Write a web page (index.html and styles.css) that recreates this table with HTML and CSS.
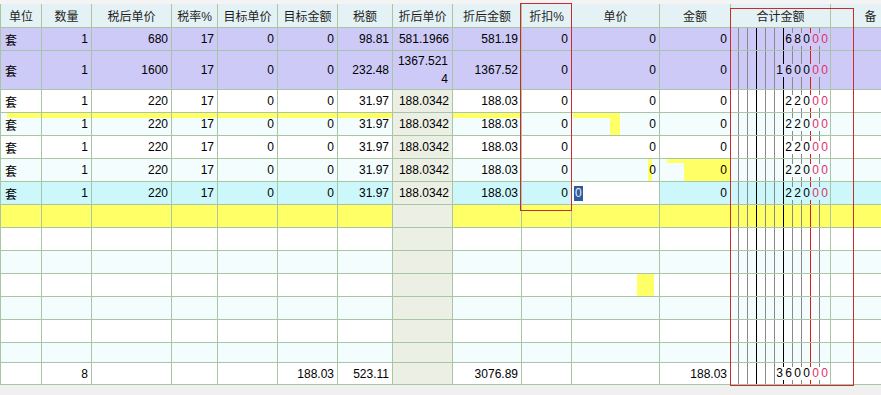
FILE: index.html
```html
<!DOCTYPE html>
<html lang="zh-CN">
<head>
<meta charset="utf-8">
<title>明细表</title>
<link rel="stylesheet" href="styles.css">
</head>
<body>
<div class="page">
  <div class="topbar"></div>
  <div class="grid">
    <div class="row head">
      <div class="cell">单位</div><div class="cell">数量</div><div class="cell">税后单价</div><div class="cell">税率%</div><div class="cell">目标单价</div><div class="cell">目标金额</div><div class="cell">税额</div><div class="cell">折后单价</div><div class="cell">折后金额</div><div class="cell">折扣%</div><div class="cell">单价</div><div class="cell">金额</div><div class="cell">合计金额</div><div class="cell">备</div>
    </div>
    <div class="row purple">
      <div class="cell">套</div><div class="cell">1</div><div class="cell">680</div><div class="cell">17</div><div class="cell">0</div><div class="cell">0</div><div class="cell">98.81</div><div class="cell">581.1966</div><div class="cell">581.19</div><div class="cell">0</div><div class="cell">0</div><div class="cell">0</div><div class="cell sum"><span class="amt"><span>6</span><span>8</span><span>0</span><span class="r">0</span><span class="r">0</span></span></div><div class="cell"></div>
    </div>
    <div class="row purple tall">
      <div class="cell">套</div><div class="cell">1</div><div class="cell">1600</div><div class="cell">17</div><div class="cell">0</div><div class="cell">0</div><div class="cell">232.48</div><div class="cell wrap">1367.5214</div><div class="cell">1367.52</div><div class="cell">0</div><div class="cell">0</div><div class="cell">0</div><div class="cell sum"><span class="amt"><span>1</span><span>6</span><span>0</span><span>0</span><span class="r">0</span><span class="r">0</span></span></div><div class="cell"></div>
    </div>
    <div class="row">
      <div class="cell">套</div><div class="cell">1</div><div class="cell">220</div><div class="cell">17</div><div class="cell">0</div><div class="cell">0</div><div class="cell">31.97</div><div class="cell tint">188.0342</div><div class="cell">188.03</div><div class="cell">0</div><div class="cell">0</div><div class="cell">0</div><div class="cell sum"><span class="amt"><span>2</span><span>2</span><span>0</span><span class="r">0</span><span class="r">0</span></span></div><div class="cell"></div>
    </div>
    <div class="row alt streak">
      <div class="cell">套</div><div class="cell">1</div><div class="cell">220</div><div class="cell">17</div><div class="cell">0</div><div class="cell">0</div><div class="cell">31.97</div><div class="cell tint">188.0342</div><div class="cell">188.03</div><div class="cell">0</div><div class="cell smear-a">0</div><div class="cell">0</div><div class="cell sum"><span class="amt"><span>2</span><span>2</span><span>0</span><span class="r">0</span><span class="r">0</span></span></div><div class="cell"></div>
    </div>
    <div class="row">
      <div class="cell">套</div><div class="cell">1</div><div class="cell">220</div><div class="cell">17</div><div class="cell">0</div><div class="cell">0</div><div class="cell">31.97</div><div class="cell tint">188.0342</div><div class="cell">188.03</div><div class="cell">0</div><div class="cell">0</div><div class="cell">0</div><div class="cell sum"><span class="amt"><span>2</span><span>2</span><span>0</span><span class="r">0</span><span class="r">0</span></span></div><div class="cell"></div>
    </div>
    <div class="row alt">
      <div class="cell">套</div><div class="cell">1</div><div class="cell">220</div><div class="cell">17</div><div class="cell">0</div><div class="cell">0</div><div class="cell">31.97</div><div class="cell tint">188.0342</div><div class="cell">188.03</div><div class="cell">0</div><div class="cell smear-b">0</div><div class="cell smear-c">0</div><div class="cell sum"><span class="amt"><span>2</span><span>2</span><span>0</span><span class="r">0</span><span class="r">0</span></span></div><div class="cell"></div>
    </div>
    <div class="row sel">
      <div class="cell">套</div><div class="cell">1</div><div class="cell">220</div><div class="cell">17</div><div class="cell">0</div><div class="cell">0</div><div class="cell">31.97</div><div class="cell tint">188.0342</div><div class="cell">188.03</div><div class="cell">0</div><div class="cell editing"><span class="selected">0</span></div><div class="cell">0</div><div class="cell sum"><span class="amt"><span>2</span><span>2</span><span>0</span><span class="r">0</span><span class="r">0</span></span></div><div class="cell"></div>
    </div>
    <div class="row yel">
      <div class="cell"></div><div class="cell"></div><div class="cell"></div><div class="cell"></div><div class="cell"></div><div class="cell"></div><div class="cell"></div><div class="cell tint"></div><div class="cell"></div><div class="cell"></div><div class="cell"></div><div class="cell"></div><div class="cell sum"></div><div class="cell"></div>
    </div>
    <div class="row">
      <div class="cell"></div><div class="cell"></div><div class="cell"></div><div class="cell"></div><div class="cell"></div><div class="cell"></div><div class="cell"></div><div class="cell tint"></div><div class="cell"></div><div class="cell"></div><div class="cell"></div><div class="cell"></div><div class="cell sum"></div><div class="cell"></div>
    </div>
    <div class="row alt">
      <div class="cell"></div><div class="cell"></div><div class="cell"></div><div class="cell"></div><div class="cell"></div><div class="cell"></div><div class="cell"></div><div class="cell tint"></div><div class="cell"></div><div class="cell"></div><div class="cell"></div><div class="cell"></div><div class="cell sum"></div><div class="cell"></div>
    </div>
    <div class="row">
      <div class="cell"></div><div class="cell"></div><div class="cell"></div><div class="cell"></div><div class="cell"></div><div class="cell"></div><div class="cell"></div><div class="cell tint"></div><div class="cell"></div><div class="cell"></div><div class="cell smear-d"></div><div class="cell"></div><div class="cell sum"></div><div class="cell"></div>
    </div>
    <div class="row alt">
      <div class="cell"></div><div class="cell"></div><div class="cell"></div><div class="cell"></div><div class="cell"></div><div class="cell"></div><div class="cell"></div><div class="cell tint"></div><div class="cell"></div><div class="cell"></div><div class="cell"></div><div class="cell"></div><div class="cell sum"></div><div class="cell"></div>
    </div>
    <div class="row">
      <div class="cell"></div><div class="cell"></div><div class="cell"></div><div class="cell"></div><div class="cell"></div><div class="cell"></div><div class="cell"></div><div class="cell tint"></div><div class="cell"></div><div class="cell"></div><div class="cell"></div><div class="cell"></div><div class="cell sum"></div><div class="cell"></div>
    </div>
    <div class="row alt short">
      <div class="cell"></div><div class="cell"></div><div class="cell"></div><div class="cell"></div><div class="cell"></div><div class="cell"></div><div class="cell"></div><div class="cell tint"></div><div class="cell"></div><div class="cell"></div><div class="cell"></div><div class="cell"></div><div class="cell sum"></div><div class="cell"></div>
    </div>
    <div class="row foot">
      <div class="cell"></div><div class="cell">8</div><div class="cell"></div><div class="cell"></div><div class="cell"></div><div class="cell">188.03</div><div class="cell">523.11</div><div class="cell tint"></div><div class="cell">3076.89</div><div class="cell"></div><div class="cell"></div><div class="cell">188.03</div><div class="cell sum"><span class="amt"><span>3</span><span>6</span><span>0</span><span>0</span><span class="r">0</span><span class="r">0</span></span></div><div class="cell"></div>
    </div>
  </div>
  <div class="mark m1"></div>
  <div class="mark m2"></div>
</div>
</body>
</html>
```

FILE: styles.css
```css
* { box-sizing: border-box; }

html, body {
  margin: 0;
  padding: 0;
  background: #f0f0f0;
}

.page {
  position: relative;
  width: 881px;
  height: 395px;
  overflow: hidden;
  background: #f0f0f0;
  font-family: "Liberation Sans", "Noto Sans CJK SC", sans-serif;
  font-size: 12px;
  color: #000;
}

.topbar {
  height: 4px;
  background: #f4f4f4;
}

.grid {
  width: 911px;
}

.row {
  display: grid;
  grid-template-columns: 42px 50px 80px 46px 60px 60px 55px 60px 69px 50px 88px 71px 100px 80px;
  height: 23px;
  border-bottom: 1px solid #a9c5a5;
  background-color: #ffffff;
}

.cell {
  display: flex;
  align-items: center;
  justify-content: flex-end;
  padding: 0 3px;
  border-right: 1px solid #a9c5a5;
  white-space: nowrap;
  overflow: hidden;
  background-repeat: no-repeat;
}

.cell:first-child {
  border-left: 1px solid #a9c5a5;
  justify-content: flex-start;
  padding-left: 4px;
}

.head {
  height: 24px;
  background-color: #e4f2f5;
  color: #1e1e1e;
}

.head .cell,
.head .cell:first-child {
  justify-content: center;
  padding: 0;
}

.purple { background-color: #cdcaf7; }
.tall { height: 39px; }
.alt { background-color: #f4fdfe; }
.sel { background-color: #ccf8fc; }
.yel { background-color: #ffff66; }
.short { height: 20px; }
.foot { height: 22px; }

.tint { background-color: #ebefe4; }

/* repaint smears left by the grid widget (drawn beneath the text) */
.streak {
  background-image: linear-gradient(#ffff66, #ffff66);
  background-size: 513px 5px;
  background-position: 7px 0;
  background-repeat: no-repeat;
}
.streak .cell:first-child,
.streak .cell:nth-child(-n+9) {
  background-image: none;
}
.streak .tint {
  background-image: linear-gradient(#ffff66, #ffff66);
  background-size: 100% 5px;
  background-position: 0 0;
}

.smear-a {
  background-image: linear-gradient(#ffff66, #ffff66), linear-gradient(#ffff66, #ffff66);
  background-size: 47px 5px, 10px 100%;
  background-position: 1px 0, 38px 0;
}

.smear-b {
  background-image: linear-gradient(#ffff66, #ffff66);
  background-size: 4px 100%;
  background-position: 76px 0;
}

.smear-c {
  background-image: linear-gradient(#ffff66, #ffff66), linear-gradient(#ffff66, #ffff66);
  background-size: 63px 4px, 46px 100%;
  background-position: 7px 0, 24px 0;
}

.smear-d {
  background-image: linear-gradient(#ffff66, #ffff66);
  background-size: 17px 100%;
  background-position: 65px 0;
}

.wrap {
  white-space: normal;
  word-break: break-all;
  text-align: right;
  line-height: 18px;
  padding-right: 4px;
}

.editing {
  background-color: #ffffff;
  justify-content: flex-start;
  padding-left: 2px;
}

.selected {
  display: inline-block;
  background: #2e5d9c;
  color: #e8eef8;
  line-height: 15px;
  padding: 0 1px;
}

.sum {
  padding: 0 1px 0 0;
  background-color: inherit;
  background-image:
    linear-gradient(#8a8a8a, #8a8a8a),
    linear-gradient(#8a8a8a, #8a8a8a),
    linear-gradient(#000000, #000000),
    linear-gradient(#8a8a8a, #8a8a8a),
    linear-gradient(#8a8a8a, #8a8a8a),
    linear-gradient(#000000, #000000),
    linear-gradient(#8a8a8a, #8a8a8a),
    linear-gradient(#8a8a8a, #8a8a8a),
    linear-gradient(#e01818, #e01818),
    linear-gradient(#8a8a8a, #8a8a8a);
  background-size: 1px 100%;
  background-repeat: no-repeat;
  background-position: 7px 0, 16px 0, 25px 0, 34px 0, 43px 0, 52px 0, 61px 0, 70px 0, 79px 0, 88px 0;
}

.amt {
  display: flex;
  height: 13px;
  background-color: inherit;
}

.amt span {
  display: block;
  width: 9px;
  text-align: center;
  line-height: 13px;
  background-color: inherit;
}

.amt .r { color: #e0306a; }

.mark {
  position: absolute;
  border: 1px solid #cc2b2b;
  pointer-events: none;
}

.m1 { left: 520px; top: 3px; width: 52px; height: 208px; }
.m2 { left: 730px; top: 8px; width: 124px; height: 378px; }
```
